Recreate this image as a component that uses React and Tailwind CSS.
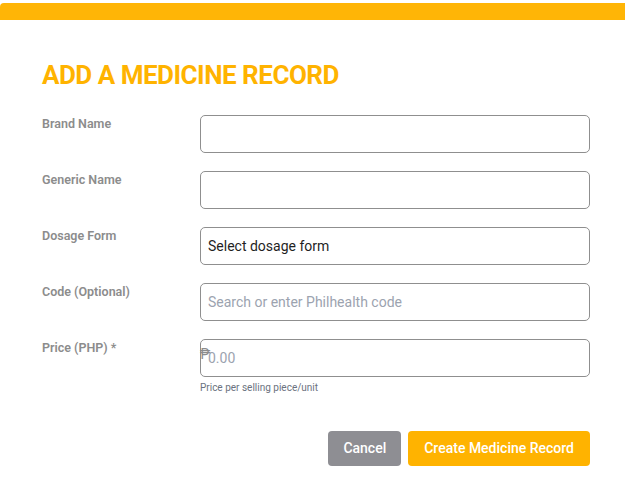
import React from 'react';

const fields = [
  { label: 'Brand Name', placeholder: '' },
  { label: 'Generic Name', placeholder: '' },
  { label: 'Dosage Form', value: 'Select dosage form' },
  { label: 'Code (Optional)', placeholder: 'Search or enter Philhealth code' },
];

export default function App() {
  return (
    <div className="w-[625px] h-[499px] bg-white overflow-hidden font-['Roboto',sans-serif]">
      <div className="mt-[3px] h-[17px] bg-[#FFB506] rounded-tl-[4px]"></div>
      <div className="pl-[42px] pr-[35px] pt-[39px]">
        <h1 className="text-[26px] leading-[32px] font-bold text-[#FFB300] tracking-[-0.5px]">ADD A MEDICINE RECORD</h1>
        <div className="mt-[24px] flex flex-col gap-[18px]">
          {fields.map((f) => (
            <div key={f.label} className="grid grid-cols-[158px_1fr]">
              <label className="pt-[1px] text-[12.5px] leading-[16px] font-semibold text-[#8c8c8c]">{f.label}</label>
              {f.value ? (
                <div className="h-[38px] border border-[#8f8f8f] rounded-[5px] px-[7px] flex items-center text-[14px] text-[#1f1f1f]">{f.value}</div>
              ) : (
                <input
                  className="h-[38px] border border-[#8f8f8f] rounded-[5px] px-[7px] text-[14px] text-[#1f1f1f] placeholder:text-[#9ca3af] outline-none"
                  placeholder={f.placeholder}
                />
              )}
            </div>
          ))}
          <div className="grid grid-cols-[158px_1fr]">
            <label className="pt-[1px] text-[12.5px] leading-[16px] font-semibold text-[#8c8c8c]">Price (PHP) *</label>
            <div>
              <div className="relative">
                <span className="absolute left-0 top-[7px] text-[14px] leading-[16px] text-[#8c8c8c]">₱</span>
                <input
                  className="w-full h-[38px] border border-[#8f8f8f] rounded-[5px] px-[7px] text-[14px] placeholder:text-[#9ca3af] outline-none"
                  placeholder="0.00"
                />
              </div>
              <p className="mt-[4px] text-[10px] leading-[14px] text-[#6b7280]">Price per selling piece/unit</p>
            </div>
          </div>
        </div>
        <div className="mt-[36px] flex justify-end gap-[7px]">
          <button className="h-[35px] px-[15px] rounded-[4px] bg-[#8E8E93] text-white text-[14px] font-medium">Cancel</button>
          <button className="h-[35px] px-[16px] rounded-[4px] bg-[#FFB300] text-white text-[14px] font-medium">Create Medicine Record</button>
        </div>
      </div>
    </div>
  );
}
